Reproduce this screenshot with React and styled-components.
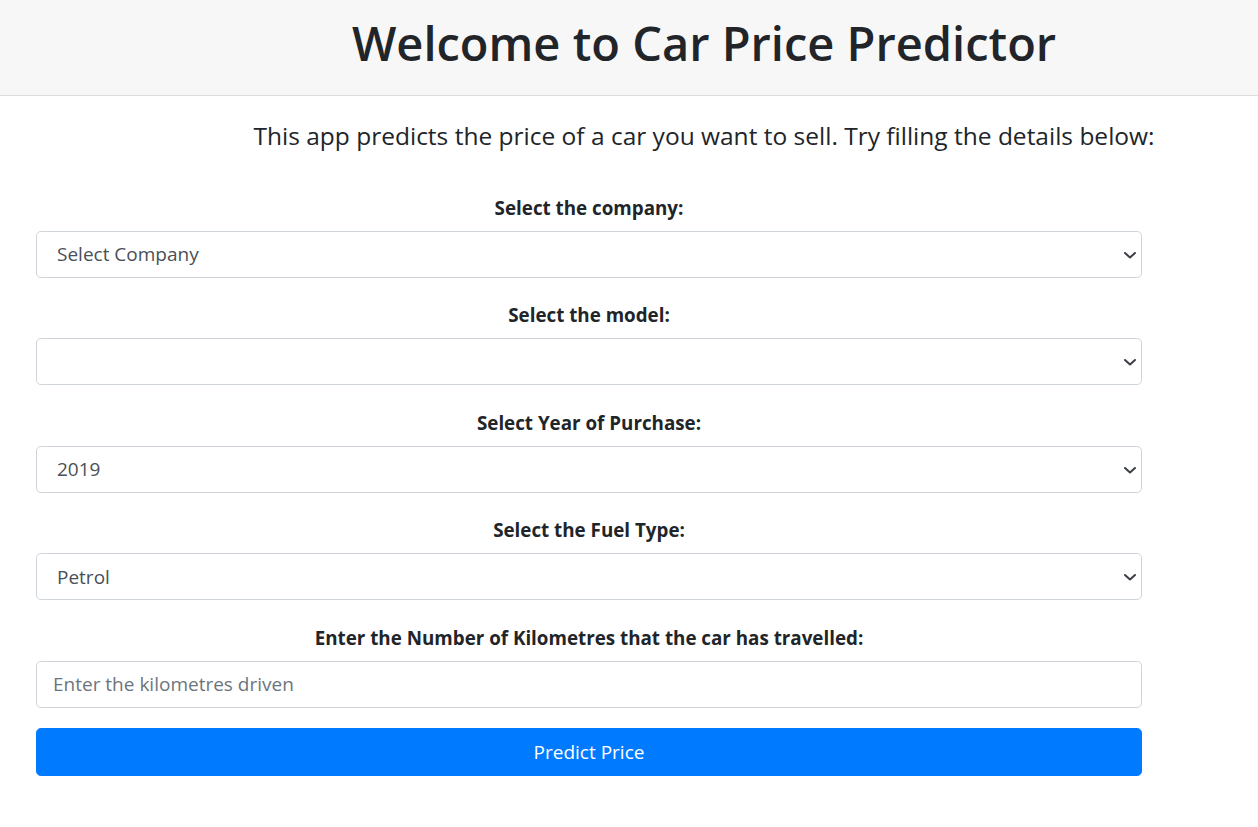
import styled, { createGlobalStyle } from "styled-components";

const GlobalStyle = createGlobalStyle`
  body {
    margin: 0;
    background: #fff;
    color: #212529;
    font-family: "Open Sans", "Noto Sans", sans-serif;
  }
  * { box-sizing: border-box; }
`;

const companies = ["Select Company", "Audi", "BMW", "Honda", "Hyundai", "Maruti", "Toyota"];
const years = ["2019", "2018", "2017", "2016", "2015"];
const fuels = ["Petrol", "Diesel", "LPG"];

const Chevron = () => (
  <ArrowIcon width="12" height="7" viewBox="0 0 12 7" fill="none">
    <path d="M1 1l5 4.5L11 1" stroke="#3b3f44" strokeWidth="2" strokeLinecap="round" strokeLinejoin="round" />
  </ArrowIcon>
);

const SelectField = ({ label, options }) => (
  <Group>
    <Label>{label}</Label>
    <SelectWrap>
      <Select defaultValue={options[0]}>
        {options.map((o) => (
          <option key={o}>{o}</option>
        ))}
      </Select>
      <Chevron />
    </SelectWrap>
  </Group>
);

const App = () => {
  return (
    <>
      <GlobalStyle />
      <Header>
        <Title>Welcome to Car Price Predictor</Title>
      </Header>

      <Main>
        <Intro>This app predicts the price of a car you want to sell. Try filling the details below:</Intro>

        <Form onSubmit={(e) => e.preventDefault()}>
          <SelectField label="Select the company:" options={companies} />
          <SelectField label="Select the model:" options={[""]} />
          <SelectField label="Select Year of Purchase:" options={years} />
          <SelectField label="Select the Fuel Type:" options={fuels} />

          <Group $gap={20}>
            <Label>Enter the Number of Kilometres that the car has travelled:</Label>
            <Input type="text" placeholder="Enter the kilometres driven" />
          </Group>

          <Button type="submit">Predict Price</Button>
        </Form>
      </Main>
    </>
  );
};

const Header = styled.header`
  height: 96px;
  background: #f7f7f7;
  border-bottom: 1px solid #dcdcdc;
  display: flex;
  align-items: center;
  justify-content: center;
  padding: 0 0 8px 150px;
`;

const Title = styled.h1`
  margin: 0;
  font-size: 47px;
  font-weight: 600;
  line-height: 1.2;
  color: #212529;
`;

const Main = styled.main`
  padding: 22px 0 40px 36px;
`;

const Intro = styled.h4`
  margin: 0 0 39px 114px;
  text-align: center;
  font-size: 24.5px;
  font-weight: 400;
  line-height: 1.5;
  color: #212529;
`;

const Form = styled.form`
  width: 1106px;
  display: flex;
  flex-direction: column;
`;

const Group = styled.div`
  display: flex;
  flex-direction: column;
  margin-bottom: ${(p) => (p.$gap ?? 23.5)}px;
`;

const Label = styled.label`
  text-align: center;
  font-size: 18.8px;
  font-weight: 700;
  line-height: 28px;
  margin-bottom: 9px;
  color: #212529;
`;

const SelectWrap = styled.div`
  position: relative;
`;

const Select = styled.select`
  width: 100%;
  height: 47px;
  padding: 0 36px 0 20px;
  font-family: inherit;
  font-size: 19px;
  color: #495057;
  background: #fff;
  border: 1px solid #ced4da;
  border-radius: 4.8px;
  appearance: none;
  outline: none;
`;

const ArrowIcon = styled.svg`
  position: absolute;
  right: 6px;
  top: 21px;
  pointer-events: none;
`;

const Input = styled.input`
  width: 100%;
  height: 47px;
  padding: 0 16px;
  font-family: inherit;
  font-size: 19px;
  color: #495057;
  border: 1px solid #ced4da;
  border-radius: 4.8px;
  outline: none;

  &::placeholder {
    color: #6c757d;
  }
`;

const Button = styled.button`
  height: 48px;
  width: 100%;
  font-family: inherit;
  font-size: 19px;
  color: #fff;
  background: #007bff;
  border: 1px solid #007bff;
  border-radius: 4.8px;
  cursor: pointer;
`;

export default App;
